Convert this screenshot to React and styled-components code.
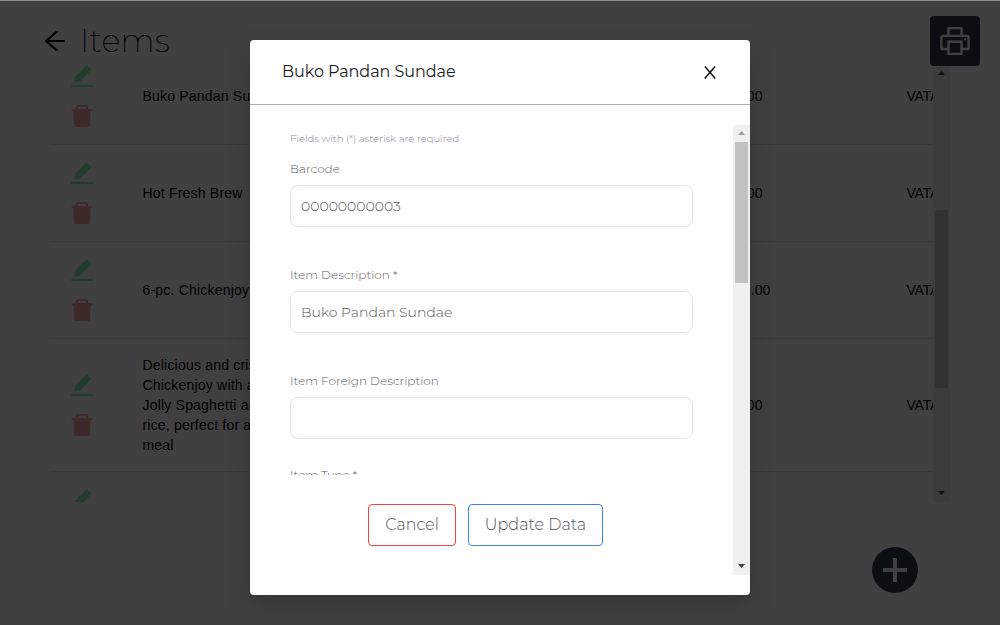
import React from "react";
import styled, { createGlobalStyle } from "styled-components";
import {
  AiFillDelete,
  AiFillEdit,
  AiOutlineArrowLeft,
  AiOutlinePrinter,
} from "react-icons/ai";

const GlobalStyle = createGlobalStyle`
  * { box-sizing: border-box; }
  body { margin: 0; overflow: hidden; background: #fff; }
  button, input { font: inherit; }
`;

const display = `"Montserrat", "Inter", "Open Sans", sans-serif`;

const Page = styled.div`
  position: relative;
  width: 1000px;
  height: 625px;
  overflow: hidden;
  background: #fff;
  font-family: "Liberation Sans", Arial, sans-serif;
`;

const TopBar = styled.header`
  display: flex;
  align-items: center;
  height: 65px;
  padding: 17px 0 0 41px;
`;

const BackButton = styled.button`
  display: flex;
  padding: 0;
  border: 0;
  background: none;
  color: #000;
  font-size: 28px;
`;

const PageTitle = styled.h1`
  margin: 0 0 0 11px;
  font-family: ${display};
  font-size: 32px;
  font-weight: 200;
  line-height: 48px;
  letter-spacing: 0.15px;
`;

const PrintButton = styled.button`
  position: absolute;
  top: 16px;
  right: 20px;
  display: flex;
  align-items: center;
  justify-content: center;
  width: 50px;
  height: 50px;
  padding: 0;
  border: 0;
  border-radius: 4px;
  background: #2f3f52;
  color: #fff;
  font-size: 36px;
`;

const ListFrame = styled.main`
  display: flex;
  width: 900px;
  height: 437px;
  margin-left: 50px;
`;

const ListClip = styled.div`
  flex: 1;
  min-width: 0;
  overflow: hidden;
`;

const Rows = styled.div`
  margin-top: -17px;
`;

const Row = styled.div`
  display: flex;
  align-items: center;
  min-height: 97px;
  padding: 16px 0;
  border-bottom: 1px solid #e2e2e2;
  font-size: 14px;
  line-height: 20px;
  letter-spacing: 0.2px;
  white-space: nowrap;
`;

const Actions = styled.div`
  display: flex;
  flex-direction: column;
  flex: none;
  gap: 12px;
  width: 92.5px;
  margin: -2px 0;
  padding-left: 18px;
  font-size: 28px;
`;

const EditIcon = styled(AiFillEdit)`
  color: #86f0b0;
`;

const DeleteIcon = styled(AiFillDelete)`
  color: #f8a5a5;
`;

const ItemName = styled.div`
  flex: none;
  width: 142px;
  white-space: normal;
`;

const Price = styled.div`
  flex: none;
  width: 179.5px;
  margin-left: 442.5px;
  letter-spacing: 0.1px;
`;

const Tax = styled.div`
  flex: none;
  letter-spacing: -0.2px;
`;

const Track = styled.div`
  display: flex;
  flex-direction: column;
  align-items: center;
  flex: none;
  width: 17px;
  height: 100%;
  background: #f0f0f0;
`;

const TrackEnd = styled.div`
  display: flex;
  align-items: center;
  justify-content: center;
  width: 17px;
  height: 17px;
  padding-bottom: 2px;
  color: ${(p) => (p.$dim ? "#a0a0a0" : "#404040")};
`;

const Thumb = styled.div`
  width: 13px;
  height: ${(p) => p.$size}px;
  margin: ${(p) => p.$start}px 0 auto;
  background: #c1c1c1;
`;

const AddButton = styled.button`
  position: absolute;
  left: 872px;
  top: 547px;
  display: flex;
  align-items: center;
  justify-content: center;
  width: 46px;
  height: 46px;
  padding: 0;
  border: 0;
  border-radius: 50%;
  background: #2f3f52;
  color: #fff;
`;

const Overlay = styled.div`
  position: absolute;
  inset: 0;
  display: flex;
  justify-content: center;
  align-items: flex-start;
  padding-top: 39px;
  border-top: 1px solid #8f9090;
  background: rgba(0, 0, 0, 0.75);
  background-clip: padding-box;
`;

const Dialog = styled.section`
  display: flex;
  flex-direction: column;
  width: 500px;
  height: 555px;
  border-radius: 4px;
  background: #fff;
  box-shadow: 0 10px 24px rgba(0, 0, 0, 0.18);
  font-family: ${display};
`;

const DialogHeader = styled.header`
  display: flex;
  align-items: center;
  justify-content: space-between;
  height: 65px;
  padding: 0 33px 0 32px;
  border-bottom: 1px solid #adadad;
`;

const DialogTitle = styled.h2`
  margin: 0 0 2px;
  color: #1c1c1c;
  font-size: 16px;
  font-weight: 400;
  letter-spacing: -0.05px;
`;

const CloseButton = styled.button`
  display: flex;
  padding: 0;
  border: 0;
  background: none;
`;

const DialogBody = styled.div`
  display: flex;
  height: 450px;
  margin-top: 20px;
`;

const Form = styled.form`
  display: flex;
  flex-direction: column;
  flex: 1;
  padding: 0 40px;
`;

const Fields = styled.div`
  height: 350px;
  overflow: hidden;
`;

const Note = styled.p`
  margin: 6px 0 0;
  color: #85889a;
  font-size: 10px;
  font-weight: 300;
  line-height: 16px;
`;

const Field = styled.label`
  display: flex;
  flex-direction: column;
  height: ${(p) => (p.$tight ? 94 : 106)}px;
  padding-top: 12px;
  color: #606060;
  font-size: 12px;
  font-weight: 300;
  line-height: 20px;
`;

const TextInput = styled.input`
  width: 403px;
  height: 42px;
  margin-top: 6px;
  padding: 0 10px;
  border: 1px solid #e5e5e5;
  border-radius: 8px;
  outline: 0;
  background: #fff;
  color: #555;
  font-size: 14px;
`;

const FormActions = styled.div`
  display: flex;
  gap: 12px;
  padding: 29px 0 0 78px;
`;

const ActionButton = styled.button`
  width: ${(p) => p.$width}px;
  height: 42px;
  padding: 0 0 1px;
  border: 1px solid ${(p) => p.$tone};
  border-radius: 4px;
  background: #fff;
  color: #555;
  font-size: 16px;
  font-weight: 300;
`;

const items = [
  { name: "Buko Pandan Sundae", price: "49.00" },
  { name: "Hot Fresh Brew", price: "45.00" },
  { name: "6-pc. Chickenjoy", price: "449.00" },
  {
    name: "Delicious and crispy Chickenjoy with a Jolly Spaghetti and rice, perfect for a meal",
    price: "99.00",
  },
  { name: "", price: "" },
];

function Scrollbar({ start, size, atTop }) {
  return (
    <Track>
      <TrackEnd $dim={atTop}>
        <svg width="7" height="4" viewBox="0 0 7 4" fill="currentColor">
          <path d="M3.5 0 7 4H0z" />
        </svg>
      </TrackEnd>
      <Thumb $start={start} $size={size} />
      <TrackEnd>
        <svg width="7" height="4" viewBox="0 0 7 4" fill="currentColor">
          <path d="M0 0H7L3.5 4z" />
        </svg>
      </TrackEnd>
    </Track>
  );
}

export default function App() {
  return (
    <Page>
      <GlobalStyle />
      <TopBar>
        <BackButton aria-label="Back">
          <AiOutlineArrowLeft />
        </BackButton>
        <PageTitle>Items</PageTitle>
      </TopBar>
      <ListFrame>
        <ListClip>
          <Rows>
            {items.map((item, i) => (
              <Row key={i}>
                <Actions>
                  <EditIcon />
                  <DeleteIcon />
                </Actions>
                <ItemName>{item.name}</ItemName>
                <Price>{item.price}</Price>
                <Tax>{item.name && "VATABLE"}</Tax>
              </Row>
            ))}
          </Rows>
        </ListClip>
        <Scrollbar start={128} size={178} />
      </ListFrame>
      <PrintButton aria-label="Print">
        <AiOutlinePrinter />
      </PrintButton>
      <AddButton aria-label="Add item">
        <svg width="24" height="24" viewBox="0 0 24 24" fill="none" stroke="currentColor" strokeWidth="4">
          <path d="M12 0v24M0 12h24" />
        </svg>
      </AddButton>
      <Overlay>
        <Dialog role="dialog">
          <DialogHeader>
            <DialogTitle>Buko Pandan Sundae</DialogTitle>
            <CloseButton aria-label="Close">
              <svg width="13" height="13" viewBox="0 0 13 13" fill="none" stroke="#111" strokeWidth="1.5">
                <path d="M.9.5 11.3 12.5M11.1.5.7 12.5" />
              </svg>
            </CloseButton>
          </DialogHeader>
          <DialogBody>
            <Form>
              <Fields>
                <Note>Fields with (*) asterisk are required</Note>
                <Field>
                  Barcode
                  <TextInput defaultValue="00000000003" />
                </Field>
                <Field>
                  Item Description *
                  <TextInput defaultValue="Buko Pandan Sundae" />
                </Field>
                <Field $tight>
                  Item Foreign Description
                  <TextInput defaultValue="" />
                </Field>
                <Field>Item Type *</Field>
              </Fields>
              <FormActions>
                <ActionButton type="button" $width={88} $tone="#ef4444">
                  Cancel
                </ActionButton>
                <ActionButton type="button" $width={135} $tone="#3b82f6">
                  Update Data
                </ActionButton>
              </FormActions>
            </Form>
            <Scrollbar start={0} size={141} atTop />
          </DialogBody>
        </Dialog>
      </Overlay>
    </Page>
  );
}
